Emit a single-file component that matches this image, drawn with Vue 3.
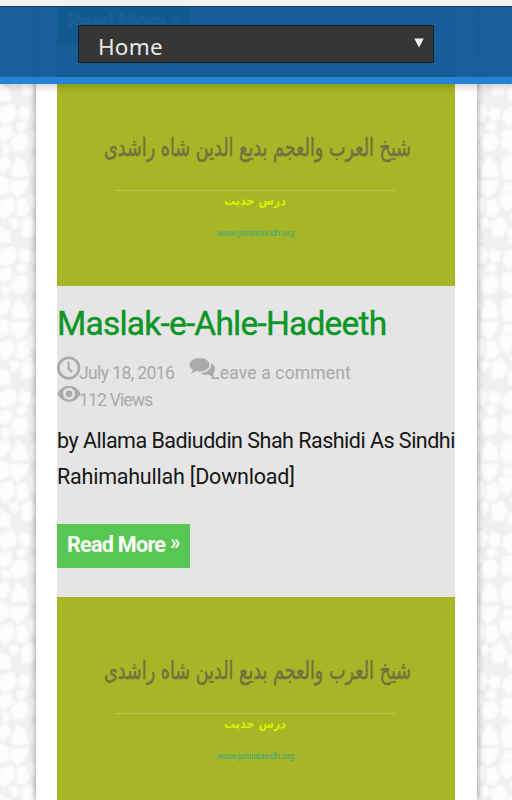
<template>
  <div class="site">
    <svg class="site__pattern" width="512" height="800" aria-hidden="true">
      <defs>
        <pattern id="stones" width="94" height="142" y="104" patternUnits="userSpaceOnUse">
          <rect width="94" height="142" fill="#f0f0f0" />
          <g fill="none" stroke="#f5f5f5" stroke-width="4" stroke-linejoin="round">
            <path
              v-for="(stone, index) in stones"
              :key="index"
              :d="stone"
            />
          </g>
          <g fill="#fdfdfd" stroke="#fafafa" stroke-width="1.500" stroke-linejoin="round">
            <path
              v-for="(stone, index) in stones"
              :key="index"
              :d="stone"
            />
          </g>
        </pattern>
      </defs>
      <rect width="512" height="800" fill="url(#stones)" />
    </svg>

    <header class="nav">
      <div class="nav__status"></div>
      <div class="nav__bar">
        <div class="nav__select">
          <span class="nav__current">Home</span>
          <svg class="nav__arrow" width="10" height="10" viewBox="0 0 10 10">
            <path d="M0.3 0.5H9.7L5 9.5Z" fill="#f2f2f2" />
          </svg>
        </div>
      </div>
    </header>

    <main class="page">
      <article v-for="post in posts" :key="post.id" class="post">
        <svg v-if="post.cover" class="post__cover" width="398" height="212" viewBox="0 0 398 212">
          <rect width="398" height="212" fill="#a7b526" />
          <text
            x="200.500"
            y="82"
            class="cover-title"
            textLength="307"
            lengthAdjust="spacingAndGlyphs"
          >شيخ العرب والعجم بديع الدين شاه راشدى</text>
          <path d="M59 116.500H338" stroke="#c0c94f" />
          <text
            x="198"
            y="131"
            class="cover-subtitle"
            textLength="62"
            lengthAdjust="spacingAndGlyphs"
          >درس حديث</text>
          <text
            x="199"
            y="162"
            class="cover-link"
            textLength="77"
            lengthAdjust="spacingAndGlyphs"
          >www.jamiatsindh.org</text>
        </svg>

        <template v-if="post.title">
          <h2 class="post__title">{{ post.title }}</h2>
          <div class="post__meta">
            <div class="post__meta-row">
              <span class="post__meta-item">
                <svg class="post__icon" width="24" height="24" viewBox="0 0 24 24">
                  <circle cx="11.700" cy="12" r="10.300" fill="none" stroke="#aaa" stroke-width="2.600" />
                  <path d="M11.500 5.500V12.500L15 16" fill="none" stroke="#aaa" stroke-width="2" />
                </svg>
                <span class="post__date">{{ post.date }}</span>
              </span>
              <span class="post__meta-item">
                <svg class="post__icon" width="27" height="24" viewBox="0 0 27 24">
                  <path
                    d="M10.500 2C16.300 2 20.500 5 20.500 8.800S16.300 15.500 10.500 15.500C9.300 15.500 8.200 15.400 7.200 15.100C5.500 16.500 3.800 17.200 2 17.300C3 16.300 3.600 15.200 3.800 13.800C1.700 12.600 0.500 10.800 0.500 8.800C0.500 5 4.700 2 10.500 2Z"
                    fill="#aaa"
                  />
                  <path
                    d="M22.300 7.300C24.700 8.700 26 10.500 26 12.700C26 14.800 24.900 16.300 23.300 17.400C23.500 18.600 24.100 19.700 25.500 20.800C23.300 20.700 21.500 19.900 20 18.600C16.500 19.300 13.300 18.600 11.200 17C17.500 17 22.500 13.700 22.300 7.300Z"
                    fill="#aaa"
                  />
                </svg>
                <span class="post__comments">{{ post.comments }}</span>
              </span>
            </div>
            <div class="post__meta-row">
              <span class="post__meta-item">
                <svg class="post__icon" width="24" height="24" viewBox="0 0 24 24">
                  <path
                    d="M0.300 10.800C3 5.600 7 2.800 12 2.800S21 5.600 23.700 10.800C21 16 17 18.800 12 18.800S3 16 0.300 10.800Z"
                    fill="#aaa"
                  />
                  <circle cx="12" cy="10.800" r="6" fill="#e5e5e5" />
                  <circle cx="12" cy="10.800" r="3.400" fill="#aaa" />
                </svg>
                <span class="post__views">{{ post.views }}</span>
              </span>
            </div>
          </div>
          <p class="post__excerpt">
            <span class="post__line">by Allama Badiuddin Shah Rashidi As Sindhi</span>
            <span class="post__line post__line--second">Rahimahullah [Download]</span>
          </p>
        </template>

        <a v-if="post.more" class="post__more">Read More <span class="post__raquo">»</span></a>
      </article>
    </main>
  </div>
</template>

<script setup>
const posts = [
  { id: 1, more: true },
  {
    id: 2,
    cover: true,
    title: "Maslak-e-Ahle-Hadeeth",
    date: "July 18, 2016",
    comments: "Leave a comment",
    views: "112 Views",
    more: true
  },
  { id: 3, cover: true }
];

// outlines of the pebbles in one background tile
const stones = [
  "M2 4L12 1L17 8L13 16L3 19L-2 12Z",
  "M22 3L30 6L29 14L23 16L19 10Z",
  "M18 20L24 18L26 23L21 27L17 24Z",
  "M1 24L10 22L12 31L5 36L-2 33Z",
  "M15 31L25 30L28 38L24 46L15 47L11 40Z",
  "M2 41L8 41L10 46L4 50Z",
  "M0 55L7 52L10 60L4 68L-2 67Z",
  "M18 53L25 59L28 71L13 72L12 65Z",
  "M11 77L28 77L24 88L18 93L12 87Z",
  "M0 72L8 76L9 87L0 91Z",
  "M2 96L12 94L14 106L5 114L-2 108Z",
  "M17 97L25 95L29 105L24 112L17 111Z",
  "M30 91L40 88L44 98L38 106L31 102Z",
  "M10 116L17 115L19 121L13 125Z",
  "M1 123L9 127L10 138L0 138Z",
  "M22 118L31 113L37 122L32 132L23 132Z",
  "M35 7L46 2L54 11L49 21L38 22L33 14Z",
  "M33 28L47 25L51 37L42 48L32 42Z",
  "M34 54L45 51L52 60L48 74L35 75L31 65Z",
  "M35 80L47 79L49 87L34 87Z",
  "M45 105L53 101L57 113L48 120L41 112Z",
  "M38 126L52 125L54 137L40 138Z",
  "M58 2L70 1L72 14L61 19L56 12Z",
  "M76 4L89 2L93 13L84 21L75 15Z",
  "M55 25L67 22L72 33L66 42L54 39Z",
  "M77 25L90 24L92 38L83 44L75 36Z",
  "M60 47L70 57L72 67L56 69L55 57Z",
  "M77 49L91 45L93 58L84 66L76 61Z",
  "M55 74L71 73L72 84L64 95L55 88Z",
  "M77 70L91 70L92 82L81 89L76 80Z",
  "M62 99L72 93L80 103L74 114L62 112Z",
  "M83 93L91 89L93 106L85 111Z",
  "M59 119L72 118L75 132L66 139L57 132Z",
  "M79 117L92 116L93 130L84 138L78 130Z"
];
</script>

<style>
body {
  background: #f4f4f4;
  overflow: hidden;
}
</style>

<style scoped>
.site {
  position: relative;
  width: 512px;
  height: 800px;
  overflow: hidden;
  font-family: Roboto, "Liberation Sans", sans-serif;
}

.site__pattern {
  position: absolute;
  inset: 0;
}

.nav {
  position: absolute;
  top: 0;
  left: 0;
  z-index: 2;
  width: 100%;
  box-shadow: 0 2px 8px rgba(0, 0, 0, 0.22);
}

.nav__status {
  height: 6px;
  background: #f1f1f1;
}

.nav__bar {
  display: flex;
  box-sizing: border-box;
  height: 78px;
  padding: 18px 78px 0;
  border-top: 1px solid #173d5c;
  border-bottom: 7px solid #2583d5;
  background: rgba(13, 84, 147, 0.95);
  background-clip: padding-box;
}

.nav__select {
  display: flex;
  flex: 1;
  align-items: flex-start;
  justify-content: space-between;
  box-sizing: border-box;
  height: 38px;
  padding: 9px 9px 0 19px;
  border: 1px solid #10202c;
  background: rgba(56, 53, 50, 0.97);
}

.nav__current {
  height: 20px;
  overflow: hidden;
  color: #e8e8e8;
  font-family: "Noto Sans", sans-serif;
  font-size: 22.500px;
  line-height: 24px;
  letter-spacing: 0.2px;
}

.nav__arrow {
  margin-top: 3px;
}

.page {
  position: relative;
  box-sizing: border-box;
  width: 441px;
  height: 800px;
  margin-left: 36px;
  padding: 1px 22px 0 21px;
  background: #ffffff;
  box-shadow: 0 0 7px rgba(0, 0, 0, 0.45);
}

.post {
  display: flex;
  flex-direction: column;
  align-items: flex-start;
  padding-bottom: 29px;
  background: #e5e5e5;
}

.post:last-child {
  padding-bottom: 0;
}

.post__cover {
  display: block;
}

.cover-title,
.cover-subtitle,
.cover-link {
  text-anchor: middle;
}

.cover-title {
  fill: #74703f;
  stroke: #74703f;
  stroke-width: 0.5px;
  font-family: "DejaVu Sans", sans-serif;
  font-size: 25px;
}

.cover-subtitle {
  fill: #daf000;
  font-family: "DejaVu Sans", sans-serif;
  font-size: 13px;
  font-weight: 700;
}

.cover-link {
  fill: #35a884;
  font-family: "Liberation Sans", sans-serif;
  font-size: 9px;
}

.post__title {
  margin: 18px 0 0;
  color: #0d9626;
  font-size: 33.500px;
  font-weight: 400;
  line-height: 40px;
  letter-spacing: -0.78px;
  white-space: nowrap;
  -webkit-text-stroke: 0.4px #0d9626;
}

.post__meta {
  display: flex;
  flex-direction: column;
  margin-top: 12px;
  color: #a9a9a9;
  font-size: 17.500px;
}

.post__meta-row {
  display: flex;
  gap: 15px;
  height: 27px;
}

.post__meta-item {
  display: flex;
  line-height: 34px;
  white-space: nowrap;
}

.post__icon {
  flex: none;
}

.post__date,
.post__views {
  margin-left: -2px;
  letter-spacing: -0.6px;
}

.post__views {
  letter-spacing: -0.8px;
}

.post__comments {
  margin-left: -6px;
  letter-spacing: 0.15px;
}

.post__excerpt {
  display: flex;
  flex-direction: column;
  margin: 13px 0 0;
  color: #161616;
  font-size: 21.500px;
  line-height: 36px;
  letter-spacing: -0.51px;
  white-space: nowrap;
}

.post__line--second {
  letter-spacing: -0.22px;
}

.post__more {
  display: block;
  box-sizing: border-box;
  width: 133px;
  height: 44px;
  padding-left: 10px;
  background: #58c751;
  color: #ffffff;
  font-size: 21.500px;
  font-weight: 700;
  line-height: 42px;
  letter-spacing: -0.7px;
  white-space: nowrap;
}

.post__raquo {
  position: relative;
  top: -2px;
  font-weight: 500;
}

.post__excerpt + .post__more {
  margin-top: 29px;
}
</style>
